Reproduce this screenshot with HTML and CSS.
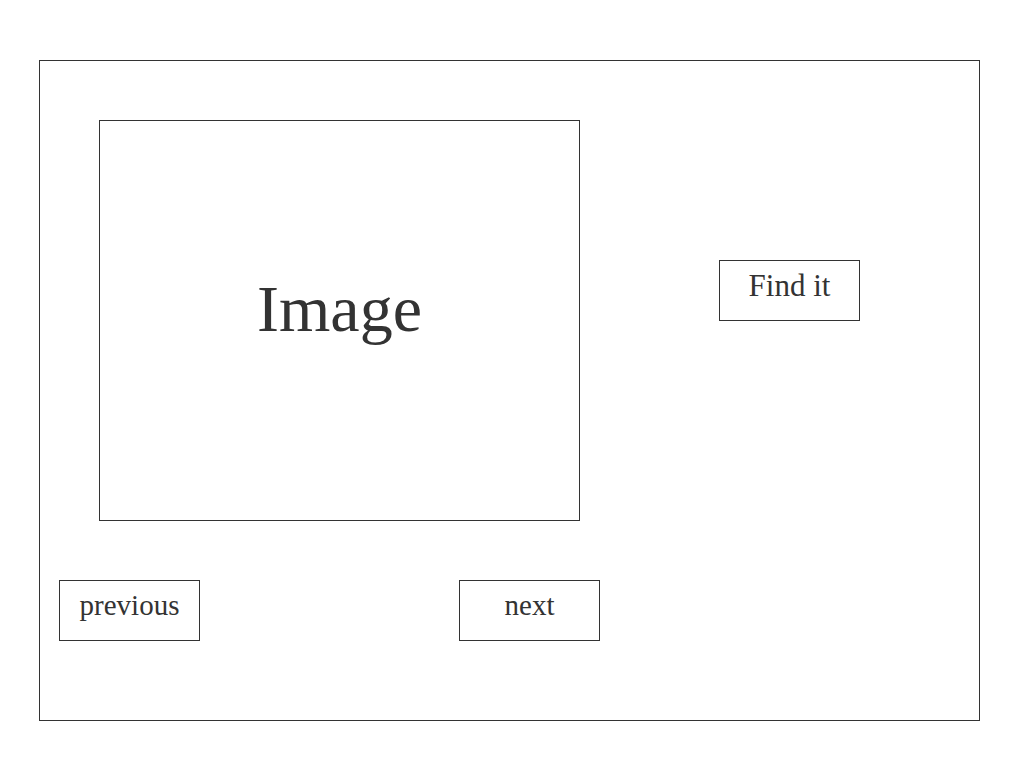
FILE: index.html
```html
<!DOCTYPE html>
<html>
<head>
<meta charset="utf-8">
<link rel="stylesheet" href="styles.css">
</head>
<body>
<div class="frame">
  <div class="top-row">
    <div class="image-box"><span class="image-label">Image</span></div>
    <div class="btn find">Find it</div>
  </div>
  <div class="bottom-row">
    <div class="btn prev">previous</div>
    <div class="btn next">next</div>
  </div>
</div>
</body>
</html>
```
FILE: styles.css
```css
* { box-sizing: border-box; }
html, body { margin: 0; padding: 0; background: #fff; }
body {
  font-family: "Liberation Serif", "Times New Roman", serif;
  color: #333;
}
.frame {
  margin: 60px 0 0 39px;
  width: 941px;
  height: 661px;
  border: 1px solid #333;
  display: flex;
  flex-direction: column;
}
.top-row {
  display: flex;
  align-items: flex-start;
  margin-top: 59px;
  padding-left: 59px;
}
.image-box {
  width: 481px;
  height: 401px;
  border: 1px solid #333;
  display: flex;
  align-items: center;
  justify-content: center;
}
.image-label {
  font-size: 66px;
  line-height: 1;
  margin-top: -24px;
}
.btn {
  width: 141px;
  height: 61px;
  border: 1px solid #333;
  font-size: 29px;
  line-height: 1;
  text-align: center;
  padding-top: 10px;
}
.find {
  margin-left: 139px;
  margin-top: 140px;
  font-size: 31px;
  padding-top: 9px;
}
.bottom-row {
  display: flex;
  margin-top: 59px;
  padding-left: 19px;
}
.next {
  margin-left: 259px;
}
```
